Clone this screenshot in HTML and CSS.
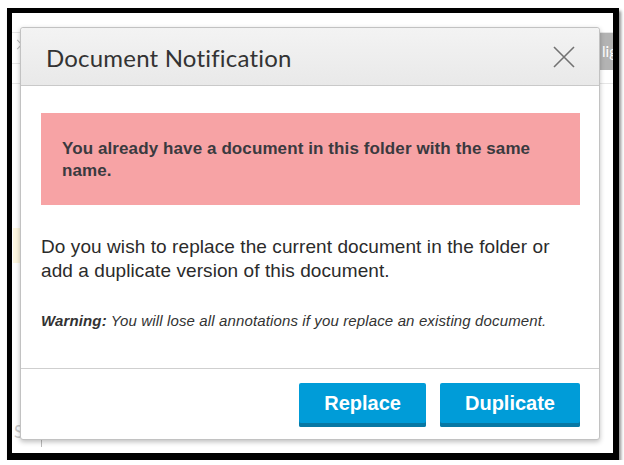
FILE: index.html
```html
<!DOCTYPE html>
<html>
<head>
<meta charset="utf-8">
<link rel="stylesheet" href="styles.css">
</head>
<body>
<div class="frame">
  <div class="backdrop">
    <div class="bg-line bg-line-1"></div>
    <div class="bg-line bg-line-2"></div>
    <div class="bg-line bg-line-3"></div>
    <div class="bg-chevron"></div>
    <div class="bg-tag">lig</div>
    <div class="bg-yellow"></div>
    <div class="bg-s">S</div>
    <div class="bg-bar"></div>
  </div>
  <div class="dialog">
    <div class="dialog-header">
      <h1 class="dialog-title">Document Notification</h1>
      <svg class="close" width="22" height="22" viewBox="0 0 22 22">
        <path d="M1 1 L21 21 M21 1 L1 21" stroke="#727272" stroke-width="1.6" fill="none"/>
      </svg>
    </div>
    <div class="dialog-body">
      <div class="alert">You already have a document in this folder with the same name.</div>
      <p class="question">Do you wish to replace the current document in the folder or add a duplicate version of this document.</p>
      <p class="warning"><b>Warning:</b> You will lose all annotations if you replace an existing document.</p>
    </div>
    <div class="dialog-footer">
      <button class="btn">Replace</button>
      <button class="btn">Duplicate</button>
    </div>
  </div>
</div>
</body>
</html>
```

FILE: styles.css
```css
html, body {
  margin: 0;
  padding: 0;
  background: #ffffff;
}

.frame {
  position: relative;
  margin: 8px 0 0 7px;
  width: 601px;
  height: 440px;
  border-style: solid;
  border-color: #000;
  border-width: 5px 6px 7px 5px;
  background: #ffffff;
  box-shadow: 2px 3px 3px rgba(0, 0, 0, 0.45);
  overflow: hidden;
}

.backdrop {
  position: absolute;
  inset: 0;
}

.bg-line {
  position: absolute;
  left: 0;
  right: 0;
  height: 1px;
  background: #e6e6e6;
}
.bg-line-1 { top: 19px; }
.bg-line-2 { top: 50px; }
.bg-line-3 { top: 70px; }

.bg-chevron {
  position: absolute;
  left: 2px;
  top: 28px;
  width: 6px;
  height: 6px;
  border-right: 1px solid #bbb;
  border-bottom: 1px solid #bbb;
  transform: rotate(-45deg);
}

.bg-tag {
  position: absolute;
  left: 588px;
  top: 20px;
  width: 14px;
  height: 37px;
  background: #b3b3b3;
  color: #fff;
  font: 15px "Lato", sans-serif;
  line-height: 37px;
  padding-left: 2px;
  overflow: hidden;
}

.bg-yellow {
  position: absolute;
  left: 1px;
  top: 215px;
  width: 8px;
  height: 35px;
  background: #fdf6df;
}

.bg-s {
  position: absolute;
  left: 2px;
  top: 408px;
  color: #c8c8c8;
  font: 17px "Lato", sans-serif;
}

.bg-bar {
  position: absolute;
  left: 29px;
  top: 426px;
  width: 1px;
  height: 8px;
  background: #bbb;
}

.dialog {
  position: absolute;
  left: 8px;
  top: 14px;
  width: 578px;
  height: 411px;
  background: #fff;
  border: 1px solid #c2c2c2;
  border-radius: 3px;
  box-shadow: 0 2px 5px rgba(0, 0, 0, 0.25);
  display: flex;
  flex-direction: column;
  font-family: "Liberation Sans", Arial, sans-serif;
}

.dialog-header {
  height: 57px;
  flex: none;
  border-bottom: 1px solid #c9c9c9;
  background: linear-gradient(#f3f3f3, #e9e9e9);
  display: flex;
  align-items: center;
  justify-content: space-between;
  padding: 0 24px 0 25px;
  border-radius: 3px 3px 0 0;
}

.dialog-title {
  margin: 0;
  font: 400 24px "Lato", sans-serif;
  letter-spacing: 0.2px;
  color: #333;
  padding-top: 1px;
}

.close {
  display: block;
  margin-top: 0;
}

.dialog-body {
  flex: 1;
  padding: 27px 19px 0 20px;
}

.alert {
  background: #f7a3a5;
  color: #3a3a3f;
  font-weight: bold;
  font-size: 17px;
  letter-spacing: 0.1px;
  line-height: 22px;
  padding: 25px 20px 23px 21px;
}

.question {
  margin: 30px 0 0 0;
  font-size: 19px;
  letter-spacing: 0.08px;
  line-height: 24px;
  color: #2b2b2b;
}

.warning {
  margin: 28px 0 0 0;
  font-size: 15px;
  letter-spacing: 0.13px;
  line-height: 20px;
  font-style: italic;
  color: #333;
}

.dialog-footer {
  flex: none;
  border-top: 1px solid #cfcfcf;
  display: flex;
  justify-content: flex-end;
  gap: 14px;
  padding: 14px 19px 12px 0;
}

.btn {
  height: 44px;
  padding: 0 25px 4px 25px;
  border: 0;
  border-radius: 2px;
  background: #009cd8;
  box-shadow: inset 0 -4px 0 #0878a4;
  color: #fff;
  font: bold 20px "Liberation Sans", Arial, sans-serif;
}
```
